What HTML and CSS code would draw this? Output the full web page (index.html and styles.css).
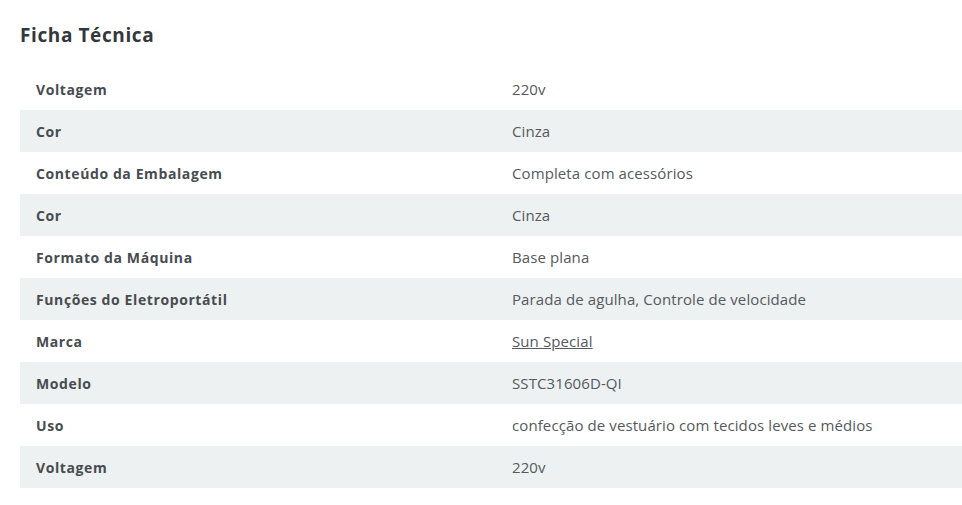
FILE: index.html
```html
<!DOCTYPE html>
<html lang="pt-BR">
<head>
<meta charset="utf-8">
<link rel="stylesheet" href="styles.css">
</head>
<body>
<section class="specs">
  <h2 class="specs-title">Ficha Técnica</h2>
  <div class="specs-table">
    <div class="row"><div class="label">Voltagem</div><div class="value">220v</div></div>
    <div class="row"><div class="label">Cor</div><div class="value">Cinza</div></div>
    <div class="row"><div class="label">Conteúdo da Embalagem</div><div class="value">Completa com acessórios</div></div>
    <div class="row"><div class="label">Cor</div><div class="value">Cinza</div></div>
    <div class="row"><div class="label">Formato da Máquina</div><div class="value">Base plana</div></div>
    <div class="row"><div class="label">Funções do Eletroportátil</div><div class="value">Parada de agulha, Controle de velocidade</div></div>
    <div class="row"><div class="label">Marca</div><div class="value"><a class="link" href="#">Sun Special</a></div></div>
    <div class="row"><div class="label">Modelo</div><div class="value">SSTC31606D-QI</div></div>
    <div class="row"><div class="label">Uso</div><div class="value">confecção de vestuário com tecidos leves e médios</div></div>
    <div class="row"><div class="label">Voltagem</div><div class="value">220v</div></div>
  </div>
</section>
</body>
</html>
```
FILE: styles.css
```css
html, body {
  margin: 0;
  padding: 0;
  background: #ffffff;
}
body {
  font-family: "Open Sans", "Noto Sans", sans-serif;
  color: #555a5e;
}
.specs {
  padding: 22px 0 0 20px;
}
.specs-title {
  margin: 0 0 20px 0;
  font-size: 19px;
  line-height: 26px;
  font-weight: 700;
  letter-spacing: 0.6px;
  color: #33383c;
}
.specs-table {
  display: flex;
  flex-direction: column;
}
.row {
  display: grid;
  grid-template-columns: 492px 1fr;
  height: 42px;
  align-items: center;
}
.row:nth-child(even) {
  background: #eef1f1;
}
.label {
  padding-left: 16px;
  font-size: 14px;
  font-weight: 700;
  letter-spacing: 0.6px;
  color: #474c50;
}
.value {
  font-size: 15px;
  letter-spacing: 0.1px;
  color: #555a5e;
}
.link {
  color: #555a5e;
  text-decoration: underline;
}
```
